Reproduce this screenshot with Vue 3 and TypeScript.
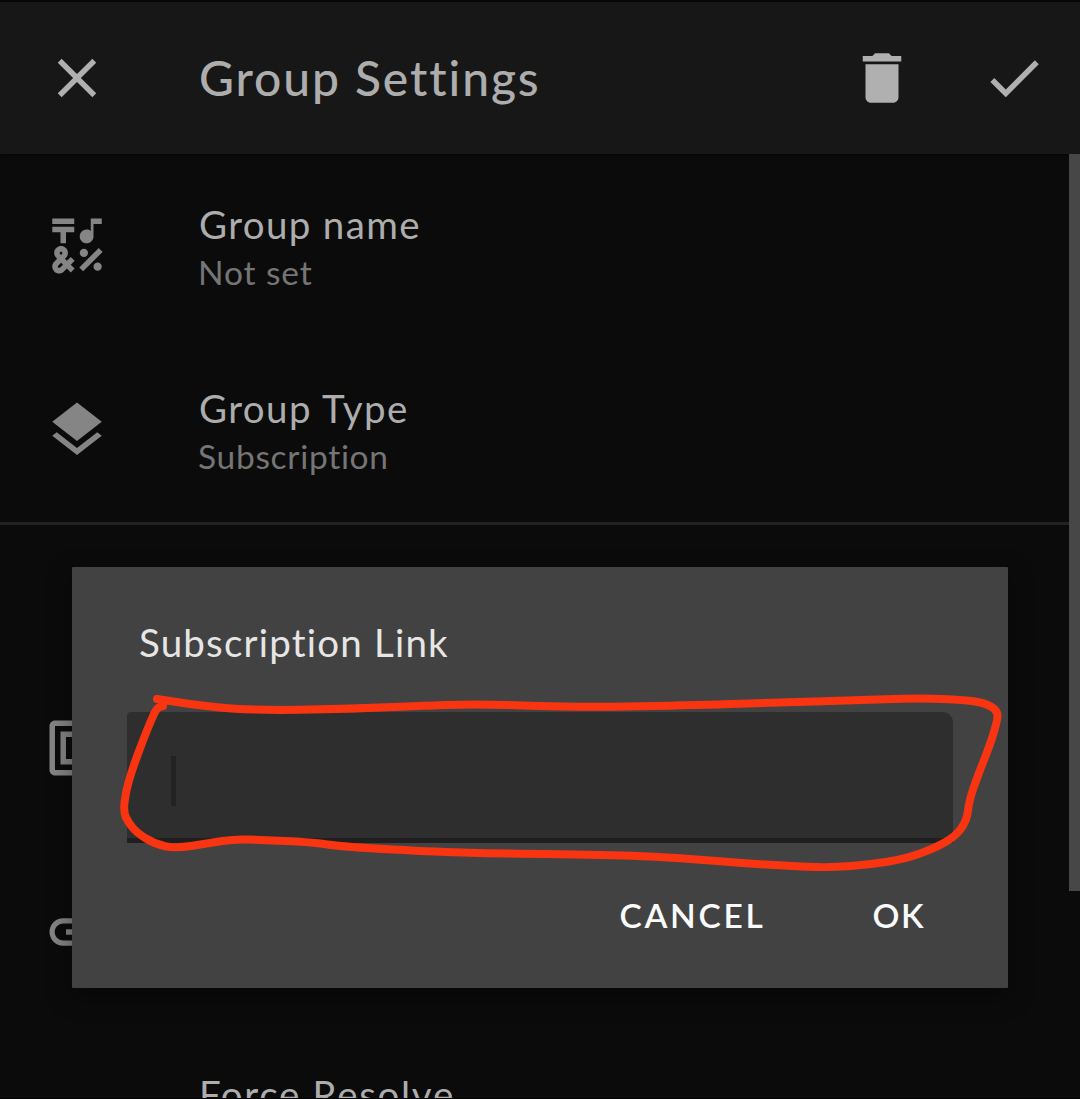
<script setup lang="ts">
interface Row {
  icon: 'symbols' | 'layers' | 'frame' | 'link' | 'none'
  title?: string
  summary?: string
  titleSpacing?: number
  summarySpacing?: number
}

const groupRows: Row[] = [
  { icon: 'symbols', title: 'Group name', summary: 'Not set', titleSpacing: 1.35, summarySpacing: 0.9 },
  { icon: 'layers', title: 'Group Type', summary: 'Subscription', titleSpacing: 1.4, summarySpacing: 0.7 },
]

const subscriptionRows: Row[] = [
  { icon: 'frame' },
  { icon: 'link' },
  { icon: 'none', title: 'Force Resolve', titleSpacing: 1.7 },
]

const paths: Record<Row['icon'], string[]> = {
  symbols: [
    'M3 2h8v2H3zM6 11h2V7h3V5H3v2h3z',
    'M15.5 11c1.38 0 2.5-1.12 2.5-2.5V4h3V2h-4v4.51C16.58 6.19 16.07 6 15.5 6 14.12 6 13 7.12 13 8.5s1.12 2.5 2.5 2.5z',
    'M9.74 15.96l-1.41 1.41-.71-.71.35-.35c.98-.98.98-2.56 0-3.54-.49-.49-1.13-.73-1.77-.73s-1.28.24-1.77.73c-.98.98-.98 2.56 0 3.54l.35.35-1.06 1.06c-.98.98-.98 2.56 0 3.54.5.5 1.14.74 1.78.74s1.28-.24 1.77-.73l1.06-1.06 1.41 1.41 1.41-1.41-1.41-1.41 1.41-1.41-1.41-1.43zM5.85 14.2c.12-.12.26-.15.35-.15s.23.03.35.15c.19.2.19.51 0 .71l-.35.35-.35-.36c-.19-.19-.19-.51 0-.7zm0 5.65c-.12.12-.26.15-.35.15s-.23-.03-.35-.15c-.19-.19-.19-.51 0-.71l1.06-1.06.71.71-1.07 1.06z',
    'M12.83 19.8l7.07-7.07 1.42 1.41-7.08 7.08zM14.5 13a1.5 1.5 0 1 0 0 3 1.5 1.5 0 0 0 0-3zM19.5 18a1.5 1.5 0 1 0 0 3 1.5 1.5 0 0 0 0-3z',
  ],
  layers: [
    'M11.99 18.54l-7.37-5.73L3 14.07l9 7 9-7-1.63-1.27-7.38 5.74zM12 16l7.36-5.73L21 9l-9-7-9 7 1.63 1.27L12 16z',
  ],
  frame: [
    'M20 2H4c-1.1 0-2 .9-2 2v16c0 1.1.9 2 2 2h16c1.1 0 2-.9 2-2V4c0-1.1-.9-2-2-2zm0 18H4V4h16v16zM18 6H6v12h12V6zm-2 10H8V8h8v8z',
  ],
  link: [
    'M3.9 12c0-1.71 1.39-3.1 3.1-3.1h4V7H7c-2.76 0-5 2.24-5 5s2.24 5 5 5h4v-1.9H7c-1.71 0-3.1-1.39-3.1-3.1zM8 13h8v-2H8v2zm9-6h-4v1.9h4c1.71 0 3.1 1.39 3.1 3.1s-1.39 3.1-3.1 3.1h-4V17h4c2.76 0 5-2.24 5-5s-2.24-5-5-5z',
  ],
  none: [],
}

// Freehand highlight around the link field
const points: [number, number][] = [
  [157, 699], [187, 704], [247, 710.5], [350, 709], [450, 704.5], [500, 704.5], [580, 707.5],
  [700, 705], [780, 702.5], [850, 700.5], [920, 698], [965, 700], [985, 703], [998, 711],
  [997, 722], [990, 745], [978, 775], [969, 801], [967, 820], [956, 836], [935, 848],
  [905, 859], [870, 864.5], [832, 867.5], [800, 866.5], [740, 863], [680, 858], [620, 855],
  [500, 853.5], [440, 852], [345, 847], [310, 842], [260, 840], [235, 839], [210, 843],
  [175, 848.5], [155, 844], [137, 833], [128, 822], [123.5, 812], [125.5, 793], [132, 770],
  [145, 735], [153, 716], [157, 708], [163, 706],
]

function smooth(p: [number, number][]): string {
  let d = `M${p[0][0]} ${p[0][1]}`
  for (let i = 1; i < p.length - 1; i++) {
    const mx = (p[i][0] + p[i + 1][0]) / 2
    const my = (p[i][1] + p[i + 1][1]) / 2
    d += `Q${p[i][0]} ${p[i][1]} ${mx} ${my}`
  }
  const last = p[p.length - 1]
  return `${d}L${last[0]} ${last[1]}`
}

const stroke = smooth(points)
</script>

<template>
  <div class="screen">
    <header class="bar">
      <svg class="icon" viewBox="0 0 24 24"><path d="M19 6.41L17.59 5 12 10.59 6.41 5 5 6.41 10.59 12 5 17.59 6.41 19 12 13.41 17.59 19 19 17.59 13.41 12z" /></svg>
      <h1 class="heading">Group Settings</h1>
      <svg class="icon" viewBox="0 0 24 24"><path d="M6 19c0 1.1.9 2 2 2h8c1.1 0 2-.9 2-2V7H6v12zM19 4h-3.5l-1-1h-5l-1 1H5v2h14V4z" /></svg>
      <svg class="icon check" viewBox="0 0 24 24"><path d="M9 16.17L4.83 12l-1.42 1.41L9 19 21 7l-1.41-1.41z" /></svg>
    </header>

    <main class="list">
      <section class="group">
        <div v-for="row in groupRows" :key="row.icon" class="row">
          <svg class="icon" viewBox="0 0 24 24"><path v-for="d in paths[row.icon]" :key="d" :d="d" /></svg>
          <div class="text">
            <div class="title" :style="{ letterSpacing: row.titleSpacing + 'px' }">{{ row.title }}</div>
            <div class="summary" :style="{ letterSpacing: row.summarySpacing + 'px' }">{{ row.summary }}</div>
          </div>
        </div>
      </section>
      <section class="group subscription">
        <div v-for="row in subscriptionRows" :key="row.icon" class="row">
          <svg class="icon" viewBox="0 0 24 24"><path v-for="d in paths[row.icon]" :key="d" :d="d" /></svg>
          <div v-if="row.title" class="text">
            <div class="title" :style="{ letterSpacing: row.titleSpacing + 'px' }">{{ row.title }}</div>
          </div>
        </div>
      </section>
    </main>

    <div class="scrollbar"></div>

    <div class="dialog">
      <h2 class="dialog-title">Subscription Link</h2>
      <div class="field"><span class="caret"></span></div>
      <div class="actions">
        <span class="action">CANCEL</span>
        <span class="action ok">OK</span>
      </div>
    </div>

    <svg class="marker" viewBox="0 0 1080 1099"><path :d="stroke" /></svg>
  </div>
</template>

<style>
body {
  background: #0b0b0b;
}
</style>

<style scoped>
.screen {
  position: relative;
  display: flex;
  flex-direction: column;
  box-sizing: border-box;
  width: 1080px;
  height: 1099px;
  overflow: hidden;
  background: #0b0b0b;
  border-top: 2px solid #070707;
  border-bottom: 1px solid #000;
  font-family: Lato, "Noto Sans", sans-serif;
}

.bar {
  display: flex;
  align-items: center;
  flex: none;
  box-sizing: border-box;
  height: 152px;
  padding: 0 33px 0 44px;
  background: #171717;
  box-shadow: 0 1px 4px #060606;
}

.icon {
  flex: none;
  width: 66px;
  height: 66px;
  fill: #b0b0b0;
}

.check {
  margin-left: 66px;
}

.heading {
  flex: 1;
  margin: 0 0 0 89px;
  font-size: 48px;
  line-height: 60px;
  font-weight: 500;
  letter-spacing: 1.9px;
  color: #adadad;
  white-space: nowrap;
}

.list {
  flex: none;
}

.group.subscription {
  padding-top: 131px;
  border-top: 3px solid #222;
}

.row {
  display: flex;
  align-items: center;
  box-sizing: border-box;
  height: 184px;
  padding-left: 44px;
}

.row .icon {
  fill: #858585;
}

.text {
  align-self: flex-start;
  padding-top: 44px;
  margin-left: 89px;
  white-space: nowrap;
}

.title {
  font-size: 38.5px;
  line-height: 52px;
  color: #adadad;
}

.summary {
  font-size: 33.5px;
  line-height: 44px;
  margin-left: -1px;
  color: #757575;
}

.scrollbar {
  position: absolute;
  top: 152px;
  right: 0;
  width: 11px;
  height: 737px;
  background: #474747;
}

.dialog {
  position: absolute;
  top: 565px;
  left: 72px;
  box-sizing: border-box;
  width: 936px;
  height: 421px;
  padding: 47px 55px 0;
  border-radius: 1px;
  background: #424242;
  box-shadow: 0 8px 26px rgba(0, 0, 0, 0.4);
}

.dialog-title {
  margin: 0 0 0 12px;
  font-size: 38.5px;
  line-height: 56px;
  font-weight: 400;
  letter-spacing: 1.2px;
  color: #e6e6e6;
  white-space: nowrap;
}

.field {
  display: flex;
  align-items: center;
  box-sizing: border-box;
  height: 131px;
  margin-top: 42px;
  padding: 12px 0 0 44px;
  border-bottom: 5px solid #1f1f1f;
  border-radius: 4px 10px 0 0;
  background: #2e2e2e;
}

.caret {
  width: 5px;
  height: 50px;
  background: #222;
}

.actions {
  display: flex;
  justify-content: flex-end;
  gap: 107px;
  margin-top: 49px;
  padding-right: 28px;
}

.action {
  font-size: 33.5px;
  line-height: 46px;
  font-weight: 600;
  letter-spacing: 2.7px;
  color: #fafafa;
}

.action.ok {
  letter-spacing: 1.5px;
}

.marker {
  position: absolute;
  top: -2px;
  left: 0;
  width: 1080px;
  height: 1099px;
  pointer-events: none;
}

.marker path {
  fill: none;
  stroke: #f93410;
  stroke-width: 8;
  stroke-linecap: round;
  stroke-linejoin: round;
}
</style>
